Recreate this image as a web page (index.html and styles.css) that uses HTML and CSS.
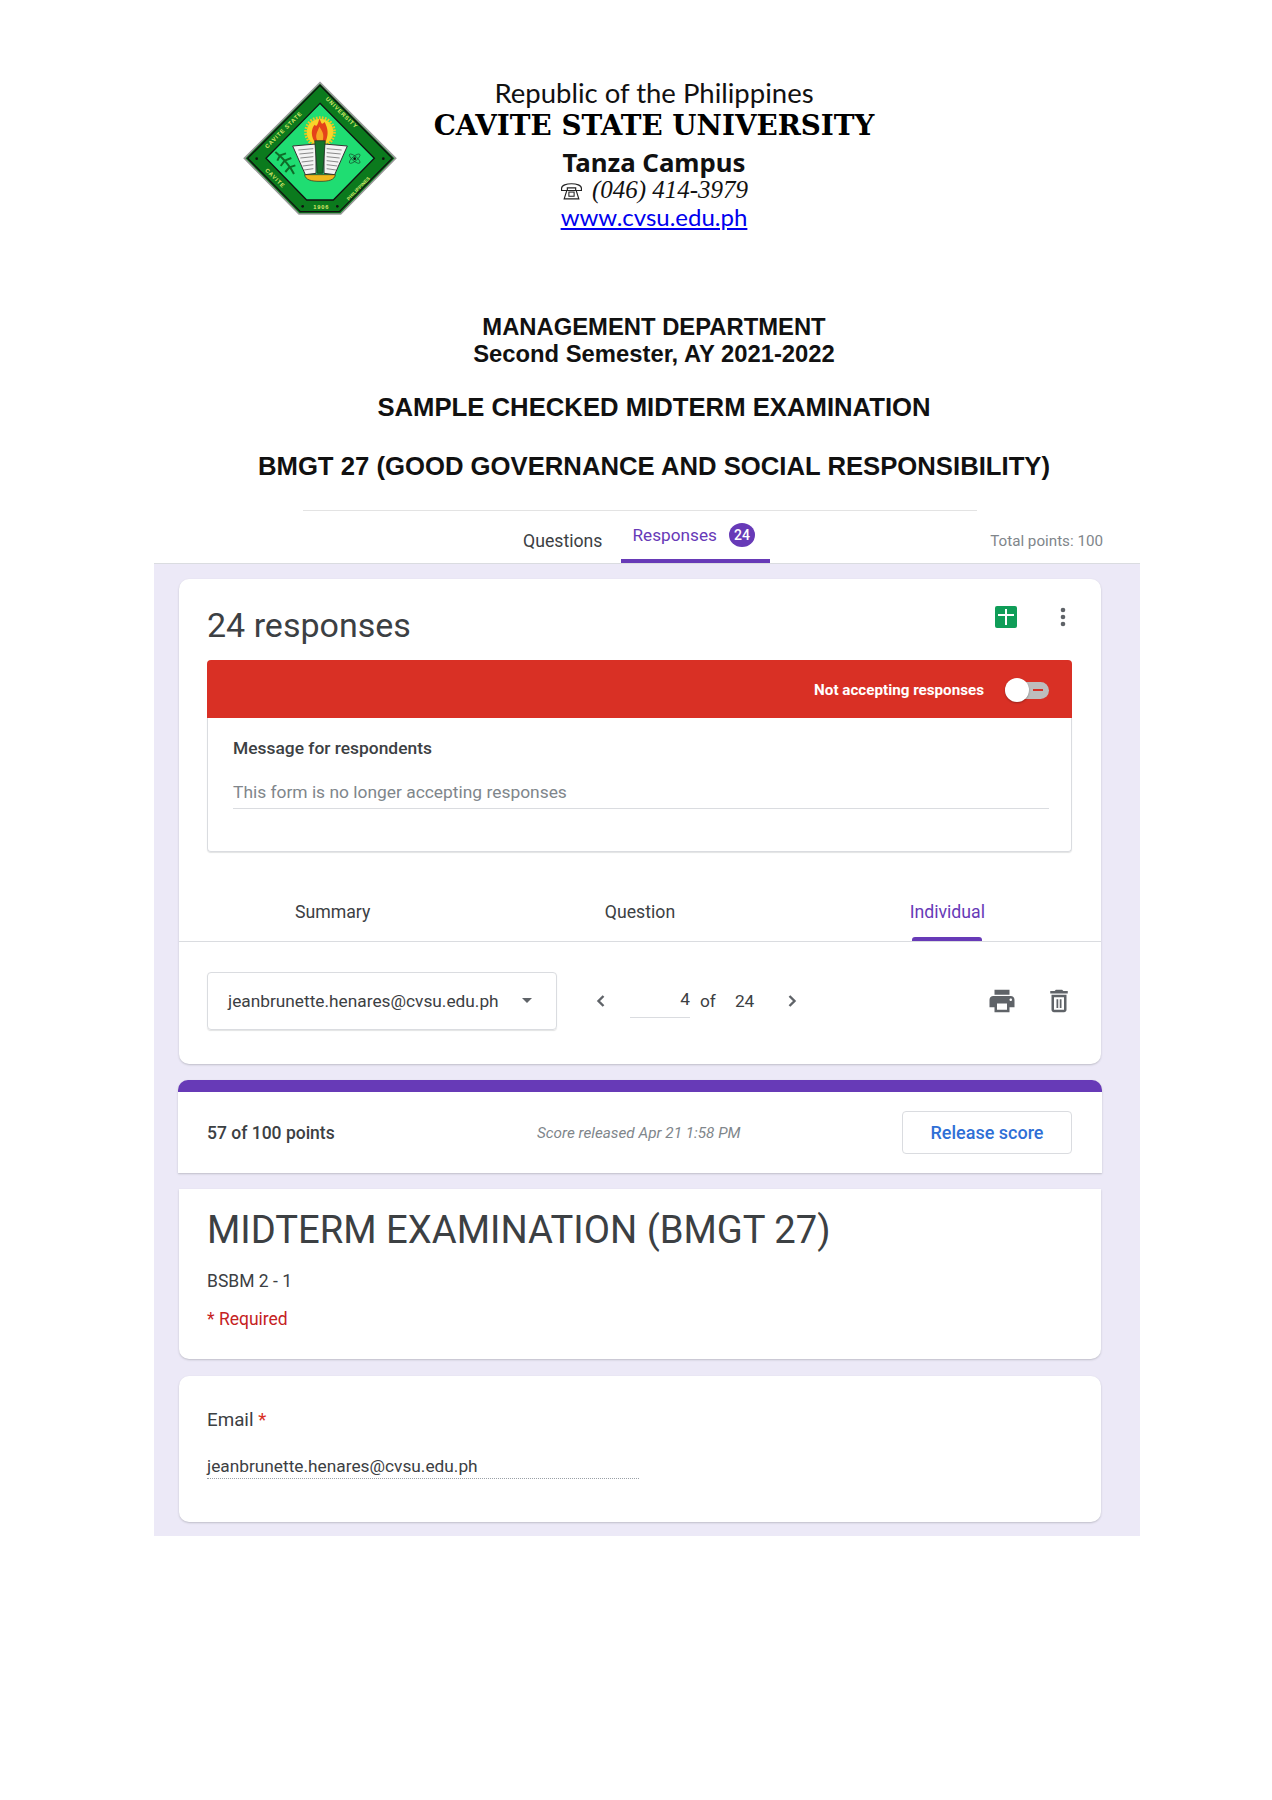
FILE: index.html
```html
<!DOCTYPE html>
<html lang="en">
<head>
  <meta charset="UTF-8">
  <meta name="viewport" content="width=device-width, initial-scale=1.0">
  <title>Sample Checked Midterm Examination</title>
  <link rel="stylesheet" href="styles.css">
</head>
<body>
  <main class="page">
    <header class="letterhead">
      <svg class="logo" viewBox="0 0 540 480" width="180" height="160">
        <defs>
          <path id="arcA" d="M112 236 L262 88"/>
          <path id="arcB" d="M286 88 L444 244"/>
          <path id="arcC" d="M104 302 L196 392"/>
          <path id="arcD" d="M356 392 L446 300"/>
        </defs>
        <polygon points="270,38 497,265 332,432 207,432 43,265" fill="#0b7a1d" stroke="#9a9a9a" stroke-width="5"/>
        <polygon points="270,46 487,265 328,425 211,425 53,265" fill="none" stroke="#111" stroke-width="4"/>
        <polygon points="270,100 433,265 310,390 230,390 108,265" fill="#1fdd72" stroke="#111" stroke-width="4"/>
        <text class="logo-text"><textPath href="#arcA">CAVITE STATE</textPath></text>
        <text class="logo-text"><textPath href="#arcB">UNIVERSITY</textPath></text>
        <text class="logo-text"><textPath href="#arcC">CAVITE</textPath></text>
        <text class="logo-text logo-small"><textPath href="#arcD">PHILIPPINES</textPath></text>
        <text class="logo-text" x="250" y="418">1906</text>
        <circle cx="80" cy="266" r="4" fill="#111"/>
        <circle cx="460" cy="266" r="4" fill="#111"/>
        <circle cx="218" cy="409" r="4" fill="#111"/>
        <circle cx="322" cy="409" r="4" fill="#111"/>
        <circle cx="270" cy="186" r="40" fill="#f8d52a"/>
        <circle cx="270" cy="186" r="43" fill="none" stroke="#f2c51c" stroke-width="9" stroke-dasharray="5 4"/>
        <path d="M268 146 C276 160 274 166 284 156 C294 176 296 192 288 212 L252 212 C242 194 244 176 254 164 C258 170 262 170 268 146Z" fill="#e4431a"/>
        <path d="M268 170 C276 182 284 192 278 212 L262 212 C254 196 262 186 268 170Z" fill="#f7a823"/>
        <polygon points="188,228 258,222 258,310 226,314" fill="#f3f3f3" stroke="#333" stroke-width="3"/>
        <polygon points="352,228 282,222 282,310 314,314" fill="#f3f3f3" stroke="#333" stroke-width="3"/>
        <path d="M205 240 L250 236 M208 252 L250 248 M211 264 L250 260 M215 276 L250 272 M218 288 L250 284 M222 300 L250 296 M335 240 L290 236 M332 252 L290 248 M329 264 L290 260 M325 276 L290 272 M322 288 L290 284 M318 300 L290 296" stroke="#8a8a8a" stroke-width="3"/>
        <polygon points="254,212 286,212 278,310 262,310" fill="#14752a" stroke="#222" stroke-width="2"/>
        <path d="M224 314 L316 314 C314 330 296 334 270 334 C244 334 226 330 224 314Z" fill="#f0b81e" stroke="#222" stroke-width="2"/>
        <path d="M136 246 C156 262 178 284 192 312 M150 256 L142 272 M150 256 L168 250 M164 272 L152 288 M164 272 L184 264 M178 292 L166 306 M178 292 L196 286" fill="none" stroke="#0e6b28" stroke-width="6"/>
        <ellipse cx="374" cy="266" rx="20" ry="7" fill="none" stroke="#17452a" stroke-width="2" transform="rotate(40 374 266)"/>
        <ellipse cx="374" cy="266" rx="20" ry="7" fill="none" stroke="#17452a" stroke-width="2" transform="rotate(-40 374 266)"/>
        <circle cx="374" cy="266" r="4" fill="#111"/>
      </svg>
      <div class="school">
        <p class="school-gov">Republic of the Philippines</p>
        <p class="school-name">CAVITE STATE UNIVERSITY</p>
        <p class="school-campus">Tanza Campus</p>
        <p class="school-phone">
          <svg class="phone-icon" viewBox="0 0 22 18" width="23" height="19">
            <path d="M1.5 7 C1.5 1 20.500 1 20.500 7 L20.500 9 L15 9 L15 6.500 L7 6.500 L7 9 L1.500 9Z" fill="none" stroke="#222" stroke-width="1.100"/>
            <path d="M6.500 9 L15.500 9 L18 17 L4 17Z" fill="none" stroke="#222" stroke-width="1.100"/>
            <rect x="8.500" y="10.500" width="5" height="4" fill="none" stroke="#222"/>
          </svg>
          <span>(046) 414-3979</span>
        </p>
        <p class="school-link"><a href="#">www.cvsu.edu.ph</a></p>
      </div>
    </header>

    <section class="exam-heading">
      <p class="exam-dept">MANAGEMENT DEPARTMENT</p>
      <p class="exam-dept">Second Semester, AY 2021-2022</p>
      <p class="exam-sample">SAMPLE CHECKED MIDTERM EXAMINATION</p>
      <p class="exam-course">BMGT 27 (GOOD GOVERNANCE AND SOCIAL RESPONSIBILITY)</p>
    </section>

    <div class="rule"></div>

    <nav class="topbar">
      <span class="topbar-link">Questions</span>
      <span class="topbar-active">Responses <b class="badge">24</b></span>
      <span class="topbar-total">Total points: 100</span>
    </nav>

    <div class="panel">
      <section class="card">
        <div class="card-inner">
          <div class="resp-head">
            <h2>24 responses</h2>
            <svg class="sheets" viewBox="0 0 22 22" width="22" height="22">
              <rect width="22" height="22" rx="2" fill="#0f9d58"/>
              <path d="M10 3 H12 V8 H19 V10 H12 V19 H10 V10 H3 V8 H10Z" fill="#fff"/>
            </svg>
            <svg class="dots" viewBox="0 0 6 20" width="6" height="20">
              <circle cx="3" cy="3" r="2.300" fill="#5f6368"/>
              <circle cx="3" cy="10" r="2.300" fill="#5f6368"/>
              <circle cx="3" cy="17" r="2.300" fill="#5f6368"/>
            </svg>
          </div>
          <div class="accept-bar">
            <span>Not accepting responses</span>
            <span class="toggle"><i class="toggle-thumb"></i><i class="toggle-dash"></i></span>
          </div>
          <div class="accept-body">
            <p class="accept-label">Message for respondents</p>
            <p class="accept-msg">This form is no longer accepting responses</p>
          </div>
        </div>

        <div class="tabs">
          <div class="tab">Summary</div>
          <div class="tab">Question</div>
          <div class="tab tab-on">Individual<i class="tab-line"></i></div>
        </div>

        <div class="toolbar">
          <div class="select">
            <span>jeanbrunette.henares@cvsu.edu.ph</span>
            <i class="caret"></i>
          </div>
          <svg class="chev chev-prev" viewBox="0 0 16 16" width="16" height="16"><path d="M10.500 3 L5.500 8 L10.500 13" fill="none" stroke="#5f6368" stroke-width="2.400"/></svg>
          <span class="pager-input">4</span>
          <span class="pager-of">of</span>
          <span class="pager-total">24</span>
          <svg class="chev chev-next" viewBox="0 0 16 16" width="16" height="16"><path d="M5.500 3 L10.500 8 L5.500 13" fill="none" stroke="#5f6368" stroke-width="2.400"/></svg>
          <svg class="tool-print" viewBox="0 0 24 24" width="30" height="30"><path fill="#5f6368" d="M19 8H5c-1.660 0-3 1.340-3 3v6h4v4h12v-4h4v-6c0-1.660-1.340-3-3-3zm-3 11H8v-5h8v5zm3-7c-.55 0-1-.45-1-1s.45-1 1-1 1 .45 1 1-.45 1-1 1zm-1-9H6v4h12V3z"/></svg>
          <svg class="tool-trash" viewBox="0 0 24 24" width="30" height="30"><path fill="#5f6368" d="M6 19c0 1.100.9 2 2 2h8c1.100 0 2-.9 2-2V7H6v12zM8 9h8v10H8V9zm7.500-5l-1-1h-5l-1 1H5v2h14V4z"/><path fill="#5f6368" d="M10 10.500h1.400v7H10zM12.600 10.500H14v7h-1.400z"/></svg>
        </div>
      </section>

      <section class="card score-card">
        <div class="score-row">
          <span class="score-points">57 of 100 points</span>
          <span class="score-note">Score released Apr 21 1:58 PM</span>
          <span class="score-btn">Release score</span>
        </div>
      </section>

      <section class="card title-card">
        <h1>MIDTERM EXAMINATION (BMGT 27)</h1>
        <p class="title-sub">BSBM 2 - 1</p>
        <p class="title-req">* Required</p>
      </section>

      <section class="card email-card">
        <p class="email-label">Email <span>*</span></p>
        <p class="email-value">jeanbrunette.henares@cvsu.edu.ph</p>
      </section>
    </div>
  </main>
</body>
</html>
```

FILE: styles.css
```css
* {
  box-sizing: border-box;
}
body {
  margin: 0;
  background: #fff;
  font-family: Roboto, 'Liberation Sans', sans-serif;
  color: #202124;
}
p, h1, h2 {
  margin: 0;
}
.page {
  margin-left: 154px;
  width: 1000px;
  padding-top: 70px;
}

/* letterhead */
.letterhead {
  display: flex;
  height: 164px;
  padding-left: 76px;
}
.logo-text {
  font-family: 'Liberation Sans', sans-serif;
  font-size: 17px;
  font-weight: 700;
  fill: #dbe86c;
  letter-spacing: 2.500px;
}
.logo-small {
  font-size: 14px;
  letter-spacing: 0.500px;
}
.school {
  width: 488px;
  padding-top: 8px;
  text-align: center;
  color: #111;
}
.school-gov {
  font-family: Lato, sans-serif;
  font-size: 27.500px;
  line-height: 30px;
}
.school-name {
  margin-top: 2px;
  font-family: 'DejaVu Serif', serif;
  font-weight: 700;
  font-size: 27.800px;
  line-height: 32px;
  color: #000;
}
.school-campus {
  margin-top: 4px;
  font-family: 'Noto Sans', sans-serif;
  font-weight: 700;
  font-size: 25.800px;
  line-height: 32px;
}
.school-phone {
  display: flex;
  justify-content: center;
  align-items: center;
  gap: 9px;
  height: 24px;
  font-family: 'Liberation Serif', serif;
  font-style: italic;
  font-size: 25px;
}
.school-link {
  font-family: Lato, sans-serif;
  font-size: 24px;
  line-height: 30px;
}
.school-link a {
  color: #0000ee;
}

/* exam heading */
.exam-heading {
  margin-top: 80px;
  text-align: center;
  font-family: 'Liberation Sans', sans-serif;
  font-weight: 700;
  font-size: 25.700px;
  line-height: 26px;
  color: #111;
}
.exam-heading .exam-dept {
  font-size: 23.800px;
}
.exam-heading .exam-dept + .exam-dept {
  margin-top: 1px;
}
.exam-heading .exam-sample {
  margin-top: 27px;
}
.exam-heading .exam-course {
  margin-top: 33px;
}
.rule {
  margin: 31px 0 0 149px;
  width: 674px;
  height: 1px;
  background: #e3e3e3;
}

/* forms top tabs */
.topbar {
  display: flex;
  width: 986px;
  height: 52px;
  padding: 0 37px 0 369px;
  font-size: 17.700px;
  line-height: 20px;
}
.topbar-link {
  padding-top: 20px;
  color: #3c4043;
}
.topbar-active {
  display: flex;
  align-items: flex-start;
  gap: 12px;
  margin-left: 18px;
  width: 149px;
  padding: 14px 0 0 12px;
  border-bottom: 4px solid #673ab7;
  font-size: 17.200px;
  color: #673ab7;
}
.badge {
  margin-top: -2px;
  width: 26px;
  height: 24px;
  border-radius: 50%;
  background: #673ab7;
  color: #fff;
  font-size: 14px;
  font-weight: 500;
  line-height: 24px;
  text-align: center;
}
.topbar-total {
  margin-left: auto;
  padding-top: 20px;
  font-size: 15.200px;
  color: #80868b;
}

/* lilac panel */
.panel {
  width: 986px;
  padding: 15px 39px 14px 25px;
  background: #ece9f7;
  border-top: 1px solid #dadce0;
}
.card {
  width: 922px;
  background: #fff;
  border-radius: 10px;
  box-shadow: 0 1px 2px rgba(60,64,67,0.25);
}
.card-inner {
  padding: 0 29px 0 28px;
}
.resp-head {
  display: flex;
  height: 81px;
  padding-right: 6px;
}
.resp-head h2 {
  padding-top: 26px;
  font-size: 34px;
  font-weight: 400;
  line-height: 40px;
  color: #3c4043;
}
.sheets {
  margin: 27px 0 0 auto;
}
.dots {
  margin: 28px 0 0 43px;
}
.accept-bar {
  display: flex;
  justify-content: flex-end;
  align-items: center;
  height: 58px;
  padding: 2px 23px 0 0;
  background: #d93025;
  border-radius: 4px 4px 0 0;
  color: #fff;
  font-size: 15.200px;
  font-weight: 700;
}
.toggle {
  position: relative;
  margin-left: 21px;
  width: 44px;
  height: 17px;
  border-radius: 9px;
  background: #bdbdbd;
}
.toggle-thumb {
  position: absolute;
  left: 0;
  top: -4px;
  width: 24px;
  height: 24px;
  border-radius: 50%;
  background: #fff;
  box-shadow: 0 1px 2px rgba(0,0,0,0.3);
}
.toggle-dash {
  position: absolute;
  left: 28px;
  top: 7px;
  width: 10px;
  height: 2px;
  background: #d93025;
}
.accept-body {
  height: 134px;
  padding: 20px 22px 0 25px;
  border: 1px solid #dadce0;
  border-top: none;
  border-radius: 0 0 4px 4px;
  box-shadow: 0 1px 1px rgba(60,64,67,0.15);
}
.accept-label {
  font-size: 17.400px;
  font-weight: 500;
  line-height: 20px;
  color: #3c4043;
}
.accept-msg {
  margin-top: 24px;
  padding-bottom: 6px;
  border-bottom: 1px solid #dadce0;
  font-size: 17.400px;
  line-height: 20px;
  color: #80868b;
}

/* summary tabs */
.tabs {
  display: grid;
  grid-template-columns: repeat(3, 1fr);
  height: 90px;
  padding-top: 50px;
  border-bottom: 1px solid #dadce0;
  font-size: 17.700px;
  line-height: 20px;
  color: #3c4043;
}
.tab {
  display: flex;
  flex-direction: column;
  align-items: center;
}
.tab-on {
  color: #673ab7;
}
.tab-line {
  margin-top: 15px;
  width: 70px;
  height: 4px;
  background: #673ab7;
  border-radius: 3px 3px 0 0;
}

/* individual toolbar */
.toolbar {
  display: flex;
  align-items: center;
  height: 122px;
  padding: 30px 0 35px 28px;
  font-size: 17.300px;
  color: #3c4043;
}
.select {
  display: flex;
  align-items: center;
  width: 350px;
  height: 58px;
  padding-left: 20px;
  border: 1px solid #dadce0;
  border-radius: 4px;
  box-shadow: 0 1px 1px rgba(60,64,67,0.15);
}
.caret {
  margin-left: 23px;
  border: 5px solid transparent;
  border-top-color: #5f6368;
  border-bottom: 0;
}
.chev-prev {
  margin-left: 36px;
}
.pager-input {
  margin-left: 21px;
  width: 60px;
  height: 35px;
  padding-top: 6px;
  padding-right: 0;
  border-bottom: 1px solid #dadce0;
  text-align: right;
}
.pager-of {
  margin-left: 10px;
}
.pager-total {
  margin-left: 19px;
}
.chev-next {
  margin-left: 30px;
}
.tool-print {
  margin-left: auto;
}
.tool-trash {
  margin: 0 27px 0 27px;
}

/* score */
.score-card {
  margin: 16px 0 0 -1px;
  width: 924px;
  border-top: 12px solid #673ab7;
  border-radius: 10px 10px 0 0;
}
.score-row {
  display: flex;
  align-items: center;
  height: 81px;
  padding: 0 30px 0 29px;
}
.score-points {
  width: 330px;
  font-size: 17.500px;
  font-weight: 500;
  color: #3c4043;
}
.score-note {
  font-size: 15.300px;
  font-style: italic;
  color: #80868b;
}
.score-btn {
  margin-left: auto;
  width: 170px;
  height: 43px;
  border: 1px solid #dadce0;
  border-radius: 4px;
  font-size: 18px;
  font-weight: 500;
  line-height: 41px;
  text-align: center;
  color: #2f6fd6;
}

/* form title */
.title-card {
  margin-top: 16px;
  height: 170px;
  padding: 18px 28px 0;
  border-radius: 0 0 10px 10px;
}
.title-card h1 {
  font-size: 38.200px;
  font-weight: 400;
  line-height: 46px;
  color: #3c4043;
}
.title-sub {
  margin-top: 18px;
  font-size: 17.500px;
  line-height: 20px;
  color: #3c4043;
}
.title-req {
  margin-top: 18px;
  font-size: 17.500px;
  line-height: 20px;
  color: #c5221f;
}

/* email */
.email-card {
  margin-top: 17px;
  height: 146px;
  padding: 32px 28px 0;
}
.email-label {
  font-size: 18.800px;
  line-height: 24px;
  color: #3c4043;
}
.email-label span {
  color: #d93025;
}
.email-value {
  margin-top: 22px;
  width: 432px;
  border-bottom: 1px dotted #9aa0a6;
  font-size: 17.300px;
  line-height: 24px;
  color: #3c4043;
}
```
